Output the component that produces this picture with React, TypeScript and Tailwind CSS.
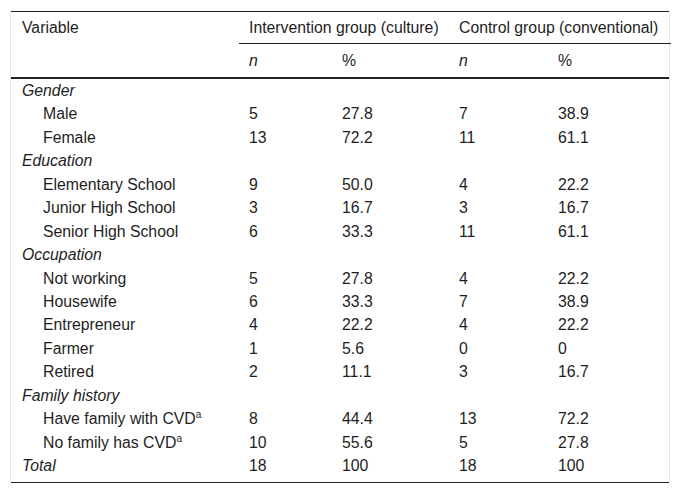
import React from "react";

type Row = { label: React.ReactNode; kind: "cat" | "item" | "total"; v?: string[] };

const Sup = () => <sup className="text-[10px] relative -top-[6px] align-baseline">a</sup>;

const rows: Row[] = [
  { label: "Gender", kind: "cat" },
  { label: "Male", kind: "item", v: ["5", "27.8", "7", "38.9"] },
  { label: "Female", kind: "item", v: ["13", "72.2", "11", "61.1"] },
  { label: "Education", kind: "cat" },
  { label: "Elementary School", kind: "item", v: ["9", "50.0", "4", "22.2"] },
  { label: "Junior High School", kind: "item", v: ["3", "16.7", "3", "16.7"] },
  { label: "Senior High School", kind: "item", v: ["6", "33.3", "11", "61.1"] },
  { label: "Occupation", kind: "cat" },
  { label: "Not working", kind: "item", v: ["5", "27.8", "4", "22.2"] },
  { label: "Housewife", kind: "item", v: ["6", "33.3", "7", "38.9"] },
  { label: "Entrepreneur", kind: "item", v: ["4", "22.2", "4", "22.2"] },
  { label: "Farmer", kind: "item", v: ["1", "5.6", "0", "0"] },
  { label: "Retired", kind: "item", v: ["2", "11.1", "3", "16.7"] },
  { label: "Family history", kind: "cat" },
  {
    label: (
      <>
        Have family with CVD<Sup />
      </>
    ),
    kind: "item",
    v: ["8", "44.4", "13", "72.2"],
  },
  {
    label: (
      <>
        No family has CVD<Sup />
      </>
    ),
    kind: "item",
    v: ["10", "55.6", "5", "27.8"],
  },
  { label: "Total", kind: "total", v: ["18", "100", "18", "100"] },
];

export default function App() {
  return (
    <div
      className="w-[681px] h-[494px] bg-white text-[15.8px] text-[#1e1e1e] pt-[11px] pl-[10px]"
      style={{ fontFamily: '"Liberation Sans", Arial, sans-serif' }}
    >
      <div className="w-[660px] border-l border-r border-[#e6e6e6]">
        <div className="border-t border-[#222]">
          <div className="grid grid-cols-[228px_210px_222px] h-[32px]">
            <div className="pl-[11px] flex items-center">Variable</div>
            <div className="pl-[10px] flex items-center border-b border-[#222] whitespace-nowrap">
              Intervention group (culture)
            </div>
            <div className="pl-[10px] flex items-center border-b border-[#222] whitespace-nowrap">
              Control group (conventional)
            </div>
          </div>
          <div className="grid grid-cols-[228px_93px_117px_99px_123px] h-[35px] border-b-2 border-[#222] italic">
            <div />
            <div className="pl-[10px] flex items-center">n</div>
            <div className="pl-[10px] flex items-center not-italic">%</div>
            <div className="pl-[10px] flex items-center">n</div>
            <div className="pl-[10px] flex items-center not-italic">%</div>
          </div>
        </div>
        <div className="pb-[5px] border-b border-[#222]">
          {rows.map((r, i) => (
            <div
              key={i}
              className="grid grid-cols-[228px_93px_117px_99px_123px] h-[23.45px]"
            >
              <div
                className={
                  "flex items-center whitespace-nowrap " +
                  (r.kind === "item" ? "pl-[32px]" : "pl-[11px] italic")
                }
              >
                <span>{r.label}</span>
              </div>
              {(r.v ?? ["", "", "", ""]).map((x, j) => (
                <div key={j} className="pl-[10px] flex items-center">
                  {x}
                </div>
              ))}
            </div>
          ))}
        </div>
      </div>
    </div>
  );
}
